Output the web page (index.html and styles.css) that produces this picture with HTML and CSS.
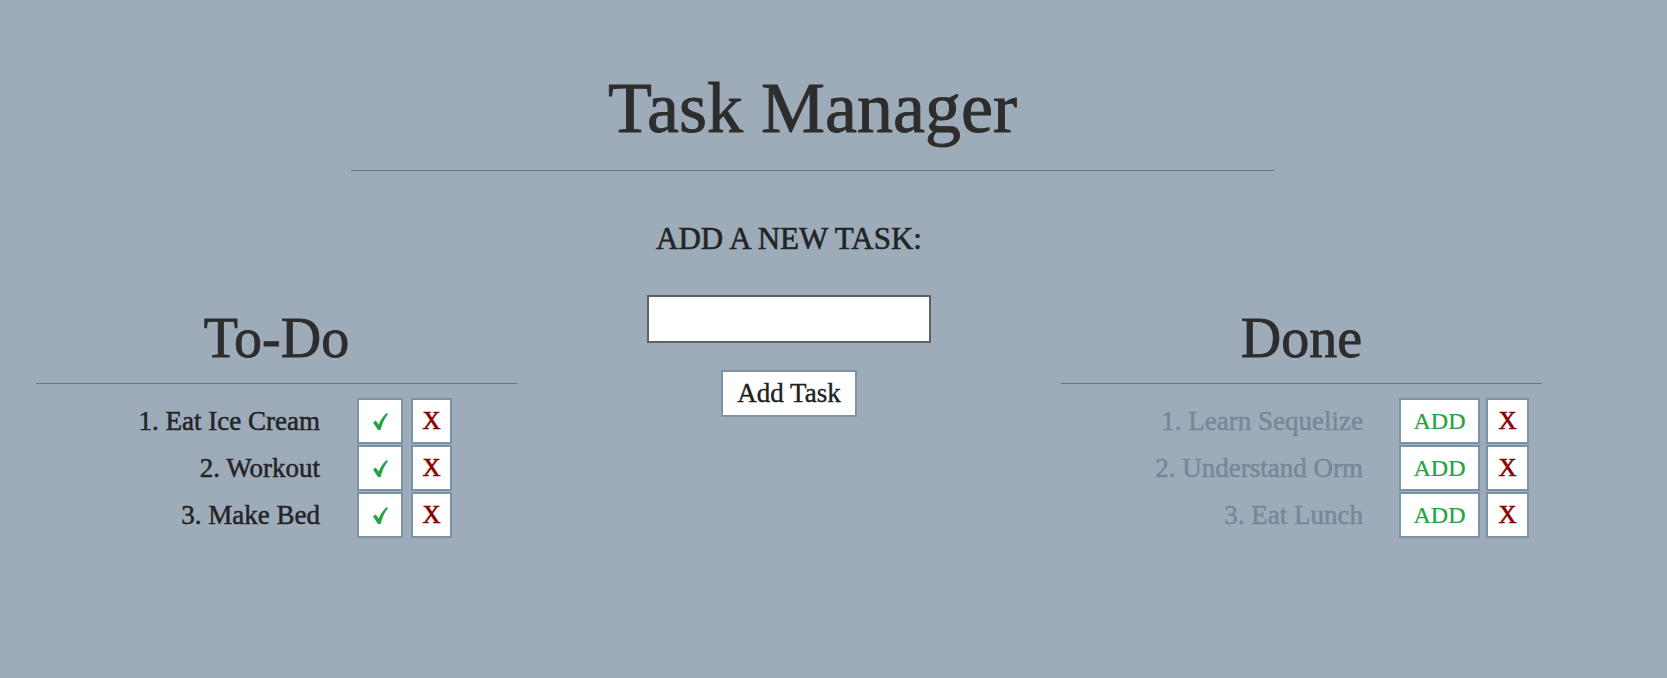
FILE: index.html
```html
<!DOCTYPE html>
<html lang="en">
<head>
<meta charset="utf-8">
<title>Task Manager</title>
<link rel="stylesheet" href="styles.css">
</head>
<body>
<header class="header">
  <h1 class="title">Task Manager</h1>
  <hr class="title-rule">
</header>
<main class="board">
  <section class="column side">
    <h2 class="col-title">To-Do</h2>
    <hr class="col-rule">
    <div class="list">
      <div class="item"><span class="item-text todo">1. Eat Ice Cream</span><button class="btn btn-check" aria-label="complete"><svg class="check" viewBox="0 0 15 17" width="15" height="17"><path d="M0 9.4 L2.8 7.6 L5.6 11.6 C7.8 6.6 10.2 3 13.8 0 L15 1.3 C11.8 5 9.6 9.6 7.6 17 L5 17 Z"/></svg></button><button class="btn btn-x">X</button></div>
      <div class="item"><span class="item-text todo">2. Workout</span><button class="btn btn-check" aria-label="complete"><svg class="check" viewBox="0 0 15 17" width="15" height="17"><path d="M0 9.4 L2.8 7.6 L5.6 11.6 C7.8 6.6 10.2 3 13.8 0 L15 1.3 C11.8 5 9.6 9.6 7.6 17 L5 17 Z"/></svg></button><button class="btn btn-x">X</button></div>
      <div class="item"><span class="item-text todo">3. Make Bed</span><button class="btn btn-check" aria-label="complete"><svg class="check" viewBox="0 0 15 17" width="15" height="17"><path d="M0 9.4 L2.8 7.6 L5.6 11.6 C7.8 6.6 10.2 3 13.8 0 L15 1.3 C11.8 5 9.6 9.6 7.6 17 L5 17 Z"/></svg></button><button class="btn btn-x">X</button></div>
    </div>
  </section>
  <section class="column middle">
    <h3 class="add-label">ADD A NEW TASK:</h3>
    <input class="task-input" type="text">
    <button class="add-btn">Add Task</button>
  </section>
  <section class="column side">
    <h2 class="col-title">Done</h2>
    <hr class="col-rule">
    <div class="list">
      <div class="item"><span class="item-text done">1. Learn Sequelize</span><button class="btn btn-add">ADD</button><button class="btn btn-x btn-x-wide">X</button></div>
      <div class="item"><span class="item-text done">2. Understand Orm</span><button class="btn btn-add">ADD</button><button class="btn btn-x btn-x-wide">X</button></div>
      <div class="item"><span class="item-text done">3. Eat Lunch</span><button class="btn btn-add">ADD</button><button class="btn btn-x btn-x-wide">X</button></div>
    </div>
  </section>
</main>
</body>
</html>
```
FILE: styles.css
```css
* { box-sizing: border-box; }

html, body {
  margin: 0;
  padding: 0;
  background: #9eacba;
  font-family: "Liberation Serif", "Times New Roman", serif;
  color: #2b2b2b;
  height: 100%;
  overflow: hidden;
}

.header {
  display: flex;
  flex-direction: column;
  align-items: center;
  width: 1625px;
}

.title {
  margin: 68px 0 0;
  font-size: 72px;
  line-height: 80px;
  font-weight: normal;
  color: #2d2d2d;
  -webkit-text-stroke: 0.9px #2d2d2d;
}

.title-rule {
  width: 923px;
  margin: 22px 0 0;
  border: 0;
  border-top: 1px solid #6b7683;
  height: 0;
}

.board {
  display: grid;
  grid-template-columns: 481px 544px 481px;
  margin-left: 36px;
  align-items: start;
}

.column.side {
  padding-top: 135px;
}

.col-title {
  margin: 0;
  font-size: 56px;
  line-height: 64px;
  font-weight: normal;
  text-align: center;
  color: #2d2d2d;
  -webkit-text-stroke: 0.8px #2d2d2d;
}

.col-rule {
  margin: 13px 0 0;
  border: 0;
  border-top: 1px solid #6b7683;
  height: 0;
}

.list {
  margin-top: 14px;
  display: flex;
  flex-direction: column;
  gap: 1px;
}

.item {
  display: flex;
  align-items: center;
  height: 46px;
}

.item-text {
  font-size: 27px;
  text-align: right;
  margin-right: 37px;
  white-space: nowrap;
}

.item-text.todo {
  width: 284px;
  color: #222426;
  -webkit-text-stroke: 0.5px #222426;
}

.item-text.done {
  width: 302px;
  margin-right: 36px;
  color: #76879a;
  -webkit-text-stroke: 0.5px #76879a;
}

.btn {
  height: 46px;
  background: #fff;
  border: 2px solid #7b93a7;
  padding: 0;
  margin: 0;
  font-family: "Liberation Serif", "Times New Roman", serif;
  display: flex;
  align-items: center;
  justify-content: center;
}

.btn-check {
  width: 46px;
  margin-right: 8px;
}

.check {
  display: block;
  fill: #25a340;
}

.btn-x {
  width: 41px;
  color: #8b0000;
  font-size: 25px;
  -webkit-text-stroke: 0.6px #8b0000;
}

.btn-x-wide {
  width: 43px;
}

.btn-add {
  width: 81px;
  color: #25a340;
  font-size: 24px;
  margin-right: 6px;
  -webkit-text-stroke: 0.2px #25a340;
}

.column.middle {
  padding-top: 50px;
  display: flex;
  flex-direction: column;
  align-items: center;
}

.add-label {
  margin: 0;
  font-size: 31px;
  line-height: 36px;
  font-weight: normal;
  color: #222426;
  -webkit-text-stroke: 0.6px #222426;
}

.task-input {
  margin-top: 38px;
  width: 284px;
  height: 48px;
  background: #fff;
  border: 2px solid #606060;
  padding: 0 6px;
  font-size: 20px;
  font-family: "Liberation Serif", serif;
}

.add-btn {
  margin-top: 27px;
  width: 136px;
  height: 47px;
  background: #fff;
  border: 2px solid #7b93a7;
  font-family: "Liberation Serif", "Times New Roman", serif;
  font-size: 27px;
  color: #1f1f1f;
  padding: 0;
  -webkit-text-stroke: 0.4px #1f1f1f;
}
```
